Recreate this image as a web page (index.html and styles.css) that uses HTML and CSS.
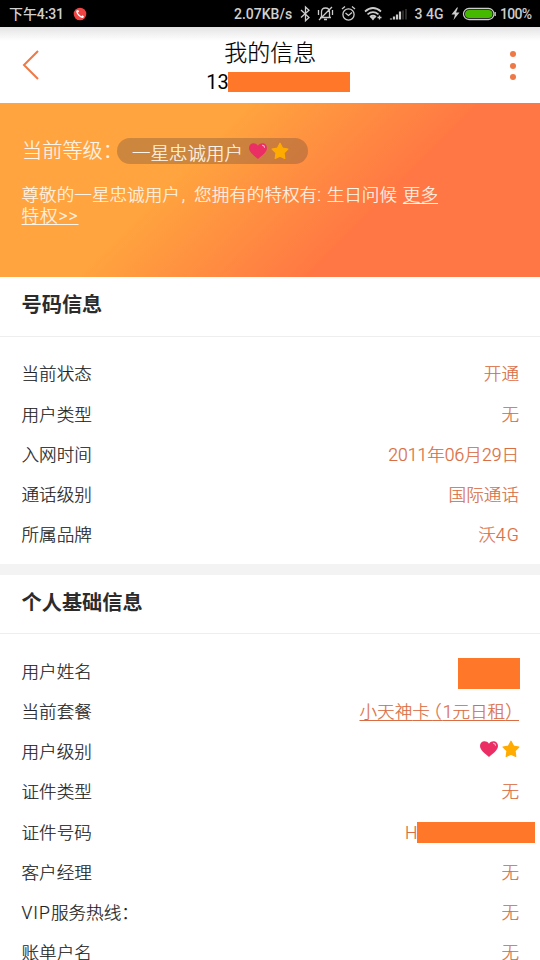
FILE: index.html
```html
<!DOCTYPE html>
<html lang="zh-CN">
<head>
<meta charset="utf-8">
<title>我的信息</title>
<link rel="stylesheet" href="styles.css">
</head>
<body>
<svg class="defs" width="0" height="0">
  <symbol id="heart" viewBox="0 0 20 18"><path d="M10 17C6.500 14 1 10.200 1 6C1 .8 7.200-.2 10 3.800C12.800-.2 19 .8 19 6C19 10.200 13.500 14 10 17Z" fill="#eb2f64"/><path d="M14.500 3.200q1.800.3 2 2" fill="none" stroke="#fbc8d4" stroke-width="1.100" stroke-linecap="round"/></symbol>
  <symbol id="star" viewBox="0 0 18 18"><path d="m9 1.200 2.500 4.900 5.400.9-3.900 3.900.8 5.600L9 14.100l-4.800 2.400.8-5.600L1.100 7l5.400-.9Z" fill="#ffab00" stroke="#ffab00" stroke-width="1.200" stroke-linejoin="round"/></symbol>
</svg>
<div class="status">
  <span class="time">下午4:31</span>
  <svg class="call" viewBox="0 0 14 14"><circle cx="7" cy="7" r="6.300" fill="#f04444"/><path d="M4.500 3.500Q3 5 5.700 8T10.300 10" fill="none" stroke="#fff" stroke-width="1.300"/><path d="m4.300 3.400 1 1.800M8.700 9l1.800 1" stroke="#fff" stroke-width="2"/></svg>
  <span class="speed">2.07KB/s</span>
  <svg class="sys" width="244" height="27" viewBox="296 0 244 27" fill="none" stroke="#ccc" stroke-width="1.300">
    <path d="m301 10 8 7.500-3.500 3.200V7l3.500 3.200-8 7.300"/>
    <path d="M320 17.500h11M321.500 17v-5q0-4 4-4t4 4v5M324 19.500h3M318.500 10v5M332.500 10v5M319 20 332 7"/>
    <circle cx="348.500" cy="14.500" r="5.600"/><path d="m345.500 13 3 2.500 3.500-3M342 9l3-2.500M352 6.500l3 2.500"/>
    <path d="M365 11.500q8-7 16 0M367.500 14.300q5.500-4.500 11 0M370 17q3-2.500 6 0" stroke-width="1.700"/><path d="m371.500 17.500 1.500 2 1.500-2Z" fill="#ccc"/><path d="M377.500 17.500h4M379.500 15.500v4"/>
    <path d="M391 19.500v-1M394 19.500v-3M397 19.500v-5M400 19.500v-8" stroke-width="2.200"/><path d="M403 19.500v-9M406 19.500V9" stroke="#333" stroke-width="1.700"/>
    <path d="m457 7.500-5.500 7h3.500l-1.500 5.500 6-7.500h-3.500l2-5Z" fill="#ccc" stroke="none"/>
    <rect x="463.500" y="8.500" width="30.500" height="11" rx="5.500"/><rect x="465" y="10" width="27.500" height="8" rx="4" fill="#45b800" stroke="none"/><path d="M495.200 12v4"/>
    <text x="414.500" y="19">3 4G</text><text x="500" y="19" textLength="32">100%</text>
  </svg>
</div>
<header class="top">
  <svg class="back" viewBox="0 0 18 32"><path d="M16 2 2 16l14 14" fill="none" stroke="#ef7847" stroke-width="2"/></svg>
  <div class="title"><h1>我的信息</h1><div class="phone">13<i class="mask"></i></div></div>
  <div class="dots"><i></i><i></i><i></i></div>
</header>
<section class="hero">
  <div class="level"><span>当前等级：</span><div class="pill"><span>一星忠诚用户</span><svg class="heart"><use href="#heart"/></svg><svg class="star"><use href="#star"/></svg></div></div>
  <p>尊敬的一星忠诚用户<span class="comma">,</span> 您拥有的特权有: 生日问候 <a>更多<br><span class="more">特权&gt;&gt;</span></a></p>
</section>
<section class="card">
  <h2>号码信息</h2>
  <dl>
    <div><dt>当前状态</dt><dd>开通</dd></div>
    <div><dt>用户类型</dt><dd>无</dd></div>
    <div><dt>入网时间</dt><dd>2011年06月29日</dd></div>
    <div><dt>通话级别</dt><dd>国际通话</dd></div>
    <div><dt>所属品牌</dt><dd>沃<span class="wide">4G</span></dd></div>
  </dl>
</section>
<section class="card personal">
  <h2>个人基础信息</h2>
  <dl>
    <div><dt>用户姓名</dt><dd><i class="name-mask"></i></dd></div>
    <div><dt>当前套餐</dt><dd class="plan">小天神<span class="before">卡</span><span class="open">（</span>1元日租<span class="close">）</span></dd></div>
    <div><dt>用户级别</dt><dd class="rank"><svg class="heart"><use href="#heart"/></svg><svg class="star"><use href="#star"/></svg></dd></div>
    <div><dt>证件类型</dt><dd>无</dd></div>
    <div><dt>证件号码</dt><dd class="id">H<i class="id-mask"></i></dd></div>
    <div><dt>客户经理</dt><dd>无</dd></div>
    <div><dt><span class="vip">VIP</span>服务热线：</dt><dd>无</dd></div>
    <div><dt>账单户名</dt><dd>无</dd></div>
  </dl>
</section>
</body>
</html>
```
FILE: styles.css
```css
* { box-sizing: border-box; }
body { margin: 0; width: 540px; height: 960px; overflow: hidden; background: #fff; color: #222; font-family: Roboto, "Noto Sans CJK SC", sans-serif; font-weight: 300; -webkit-text-stroke: .2px currentColor; }
h1, h2, dl, dd, p { margin: 0; }
svg { display: block; flex: none; }
.defs { position: absolute; }
.status { height: 27px; background: #000; color: #d0d0d0; display: flex; align-items: center; font-size: 14px; font-weight: 500; -webkit-text-stroke: 0; }
.time { width: 64px; margin-left: 9px; font-weight: 500; line-height: 27px; padding-top: 1px; white-space: nowrap; letter-spacing: -.1px; }
.call { width: 14px; height: 14px; margin-right: 147px; }
.speed { width: 62px; white-space: nowrap; }
.sys text { fill: #ccc; stroke: none; font-size: 14px; }
.top { height: 76px; display: flex; justify-content: space-between; padding: 0 23px 0 22px; background: linear-gradient(#e4e4e4, #fff 14px); }
.back { width: 18px; height: 32px; margin-top: 22px; }
.title { color: #000; margin-left: 6px; }
.title h1 { font-size: 23px; font-weight: 300; line-height: 31px; height: 30px; margin: 11px 0 0 18px; }
.phone { display: flex; font-size: 20px; line-height: 28px; font-weight: 400; -webkit-text-stroke: 0; }
.mask { width: 122px; height: 20px; margin-top: 4px; margin-left: -1px; background: #ff7728; }
.dots { width: 7px; display: flex; flex-direction: column; gap: 5.500px; margin-top: 24px; }
.dots i { width: 6px; height: 6px; border-radius: 50%; background: #ef7847; }
.hero { height: 174px; padding: 35px 22px 0; color: #fff5e8; background: linear-gradient(135deg, #ffa43e 35%, #ff7744 68%); }
.level { display: flex; font-size: 20.200px; line-height: 26px; height: 26px; white-space: nowrap; }
.level > span { width: 95px; line-height: 26px; }
.pill { width: 191px; height: 26px; border-radius: 13px; padding-left: 15px; display: flex; background: rgba(85, 65, 60, .3); font-size: 18.500px; line-height: 32px; }
.pill > span { width: 116px; }
.heart { width: 20px; height: 18px; }
.star { width: 18px; height: 18px; }
.pill .heart, .pill .star { margin-top: 4px; }
.pill .star { margin-left: 3px; }
.hero p { margin: 21px 0 0 -.5px; font-size: 17.600px; line-height: 21px; white-space: nowrap; word-spacing: 1.500px; }
.comma { margin: 0 3px 0 2px; }
.more { letter-spacing: .9px; }
.hero a { text-decoration: underline; text-underline-offset: 2px; text-decoration-thickness: 1px; }
.card { height: 287px; }
h2 { height: 60px; border-bottom: 1px solid #eee; padding: 14px 21.500px; font-size: 20.200px; line-height: 29px; font-weight: 700; color: #2b2b2b; -webkit-text-stroke: 0; }
dl { padding: 17.400px 21px 0 21.500px; }
dl > div { display: flex; justify-content: space-between; height: 40.250px; line-height: 40px; font-size: 17.600px; white-space: nowrap; }
dd { color: #d96d43; }
.wide { letter-spacing: 1.200px; margin-right: -1px; }
.personal { border-top: 11px solid #f3f3f3; height: 420px; }
.personal h2 { height: 59px; }
.personal dl { padding-top: 17.500px; }
.name-mask { display: block; width: 62px; height: 31px; margin: 6px -1px 0 0; background: #ff7728; }
.plan { text-decoration: underline; text-underline-offset: 2px; text-decoration-thickness: 1px; }
.open, .close { font-feature-settings: "halt"; }
.before { letter-spacing: 3px; }
.open { letter-spacing: 1px; }
.close { letter-spacing: 5px; }
.rank { display: flex; gap: 4px; padding-top: 8px; }
.rank svg { margin-right: -1px; }
.id { display: flex; margin-right: -16px; }
.id-mask { width: 118px; height: 21px; margin: 9px 0 0 -.5px; background: #ff7728; }
.vip { letter-spacing: 1px; }
```
